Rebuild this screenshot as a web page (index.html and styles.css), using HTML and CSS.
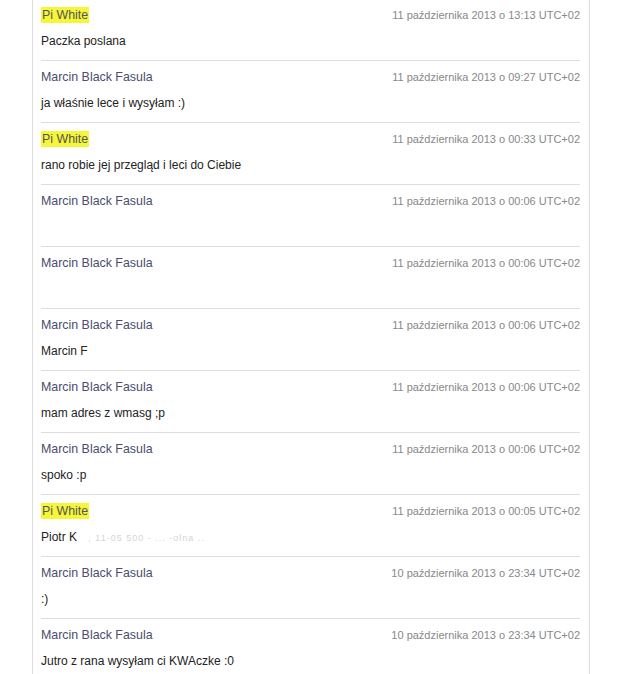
FILE: index.html
```html
<!DOCTYPE html>
<html lang="pl">
<head>
  <meta charset="UTF-8">
  <title>Wiadomości</title>
  <link rel="stylesheet" href="styles.css">
</head>
<body>

<div class="thread">
  <div class="msg">
    <div class="msg-head"><span class="author me">Pi White</span><span class="date">11 października 2013 o 13:13 UTC+02</span></div>
    <div class="msg-body">Paczka poslana</div>
  </div>
  <div class="msg">
    <div class="msg-head"><span class="author">Marcin Black Fasula</span><span class="date">11 października 2013 o 09:27 UTC+02</span></div>
    <div class="msg-body">ja właśnie lece i wysyłam :)</div>
  </div>
  <div class="msg">
    <div class="msg-head"><span class="author me">Pi White</span><span class="date">11 października 2013 o 00:33 UTC+02</span></div>
    <div class="msg-body">rano robie jej przegląd i leci do Ciebie</div>
  </div>
  <div class="msg">
    <div class="msg-head"><span class="author">Marcin Black Fasula</span><span class="date">11 października 2013 o 00:06 UTC+02</span></div>
    <div class="msg-body"></div>
  </div>
  <div class="msg">
    <div class="msg-head"><span class="author">Marcin Black Fasula</span><span class="date">11 października 2013 o 00:06 UTC+02</span></div>
    <div class="msg-body"></div>
  </div>
  <div class="msg">
    <div class="msg-head"><span class="author">Marcin Black Fasula</span><span class="date">11 października 2013 o 00:06 UTC+02</span></div>
    <div class="msg-body">Marcin F</div>
  </div>
  <div class="msg">
    <div class="msg-head"><span class="author">Marcin Black Fasula</span><span class="date">11 października 2013 o 00:06 UTC+02</span></div>
    <div class="msg-body">mam adres z wmasg ;p</div>
  </div>
  <div class="msg">
    <div class="msg-head"><span class="author">Marcin Black Fasula</span><span class="date">11 października 2013 o 00:06 UTC+02</span></div>
    <div class="msg-body">spoko :p</div>
  </div>
  <div class="msg">
    <div class="msg-head"><span class="author me">Pi White</span><span class="date">11 października 2013 o 00:05 UTC+02</span></div>
    <div class="msg-body">Piotr K <span class="blur">,  11-05 500 -  ...  -olna ..</span></div>
  </div>
  <div class="msg">
    <div class="msg-head"><span class="author">Marcin Black Fasula</span><span class="date">10 października 2013 o 23:34 UTC+02</span></div>
    <div class="msg-body">:)</div>
  </div>
  <div class="msg">
    <div class="msg-head"><span class="author">Marcin Black Fasula</span><span class="date">10 października 2013 o 23:34 UTC+02</span></div>
    <div class="msg-body">Jutro z rana wysyłam ci KWAczke :0</div>
  </div>
</div>

</body>
</html>
```

FILE: styles.css
```css
body {
  margin: 0;
  background-color: #fff;
  font-family: 'Liberation Sans', Arial, sans-serif;
  font-size: 12px;
  color: #222;
}

.thread {
  margin: -1px 0 0 32px;
  width: 539px;
  padding: 0 9px 0 8px;
  border-left: 1px solid #ddd;
  border-right: 1px solid #ddd;
}

.msg {
  padding: 6px 0 9px;
  border-bottom: 1px solid #ddd;
}

.msg-head {
  display: flex;
  justify-content: space-between;
  align-items: center;
  line-height: 20px;
}

.author {
  font-size: 12.4px;
  color: #4a4d70;
}

.author.me {
  background-color: #f5f53a;
  color: #555;
  padding: 1px 1px;
  line-height: 14px;
}

.date {
  font-size: 11px;
  color: #888;
}

.msg-body {
  margin-top: 6px;
  line-height: 20px;
  height: 20px;
}

.blur {
  margin-left: 8px;
  color: #d4d4d4;
  font-size: 9px;
  letter-spacing: 1px;
}
```
